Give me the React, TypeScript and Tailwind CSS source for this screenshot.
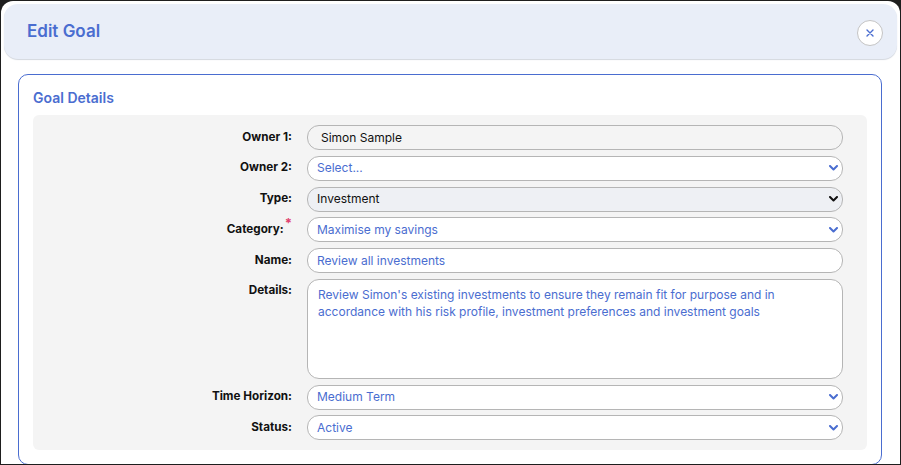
import React from "react";

const BLUE = "#4a6dd0";

function Chevron({ color }: { color: string }) {
  return (
    <svg
      className="pointer-events-none absolute right-[4px] top-1/2 -translate-y-1/2"
      width="9"
      height="6"
      viewBox="0 0 9 6"
    >
      <path d="M1 1 L4.5 4.5 L8 1" fill="none" stroke={color} strokeWidth="2" strokeLinecap="round" strokeLinejoin="round" />
    </svg>
  );
}

function Label({ children, top }: { children: React.ReactNode; top?: boolean }) {
  return (
    <div
      className={`flex h-[25px] items-center justify-end text-[11.7px] font-bold text-[#111] ${top ? "self-start" : ""}`}
    >
      {children}
    </div>
  );
}

function SelectBox({ value, dark, bg }: { value: string; dark?: boolean; bg?: string }) {
  return (
    <div
      className={`relative flex h-[25px] items-center rounded-[12px] border border-[#b5b5b5] pl-[9px] text-[12px] ${bg ?? "bg-white"} ${dark ? "text-[#111]" : "text-[#4a6dd0]"}`}
    >
      {value}
      <Chevron color={dark ? "#111" : BLUE} />
    </div>
  );
}

export default function App() {
  return (
    <div
      className="h-[465px] w-[901px] overflow-hidden bg-[#1e1e1e] p-px"
      style={{ fontFamily: "Inter, 'Noto Sans', sans-serif" }}
    >
      <div className="h-full overflow-hidden rounded-t-[12px] bg-white px-[3px] pt-[3px]">
        <header className="flex h-[55px] items-center justify-between rounded-[14px] bg-[#e9eef8] pl-[23px] pr-[14px] shadow-[0_1px_1px_#d3d7de]">
          <h1 className="text-[17px] font-semibold text-[#4a6dd0]">Edit Goal</h1>
          <button className="mt-[2px] flex h-[26px] w-[26px] items-center justify-center rounded-full border border-[#c4c4c4] bg-white">
            <svg width="8" height="8" viewBox="0 0 8 8">
              <path d="M1 1 L7 7 M7 1 L1 7" stroke={BLUE} strokeWidth="1.4" strokeLinecap="round" />
            </svg>
          </button>
        </header>

        <div className="pl-[14px] pr-[15px] pt-[15px]">
          <section className="rounded-[10px] border border-[#4a6dd0] px-[14px] pt-[14px] pb-[14px]">
            <h2 className="text-[14px] leading-[18px] font-semibold text-[#4a6dd0]">Goal Details</h2>
            <div className="mt-[8px] grid grid-cols-[259px_1fr] gap-x-[15px] gap-y-[5.75px] rounded-[6px] bg-[#f4f4f4] pt-[10px] pb-[10px] pr-[24px]">
              <Label>Owner 1:</Label>
              <div className="flex h-[25px] items-center rounded-[12px] border border-[#b5b5b5] bg-[#f4f4f4] pl-[13px] text-[12px] text-[#111]">
                Simon Sample
              </div>

              <Label>Owner 2:</Label>
              <SelectBox value="Select..." />

              <Label>Type:</Label>
              <SelectBox value="Investment" dark bg="bg-[#eef0f4]" />

              <Label>
                Category:
                <span className="relative -top-[6px] ml-px text-[13px] font-bold leading-none text-[#e0406e]">*</span>
              </Label>
              <SelectBox value="Maximise my savings" />

              <Label>Name:</Label>
              <div className="flex h-[25px] items-center rounded-[12px] border border-[#b5b5b5] bg-white pl-[9px] text-[12px] text-[#4a6dd0]">
                Review all investments
              </div>

              <Label top>Details:</Label>
              <div className="h-[100px] rounded-[12px] border border-[#b5b5b5] bg-white pl-[10px] pr-[20px] pt-[6px] text-[12px] leading-[17px] text-[#4a6dd0]">
                Review Simon's existing investments to ensure they remain fit for purpose and in accordance with his risk profile, investment preferences and investment goals
              </div>

              <Label>Time Horizon:</Label>
              <SelectBox value="Medium Term" />

              <Label>Status:</Label>
              <SelectBox value="Active" />
            </div>
          </section>
        </div>
      </div>
    </div>
  );
}
